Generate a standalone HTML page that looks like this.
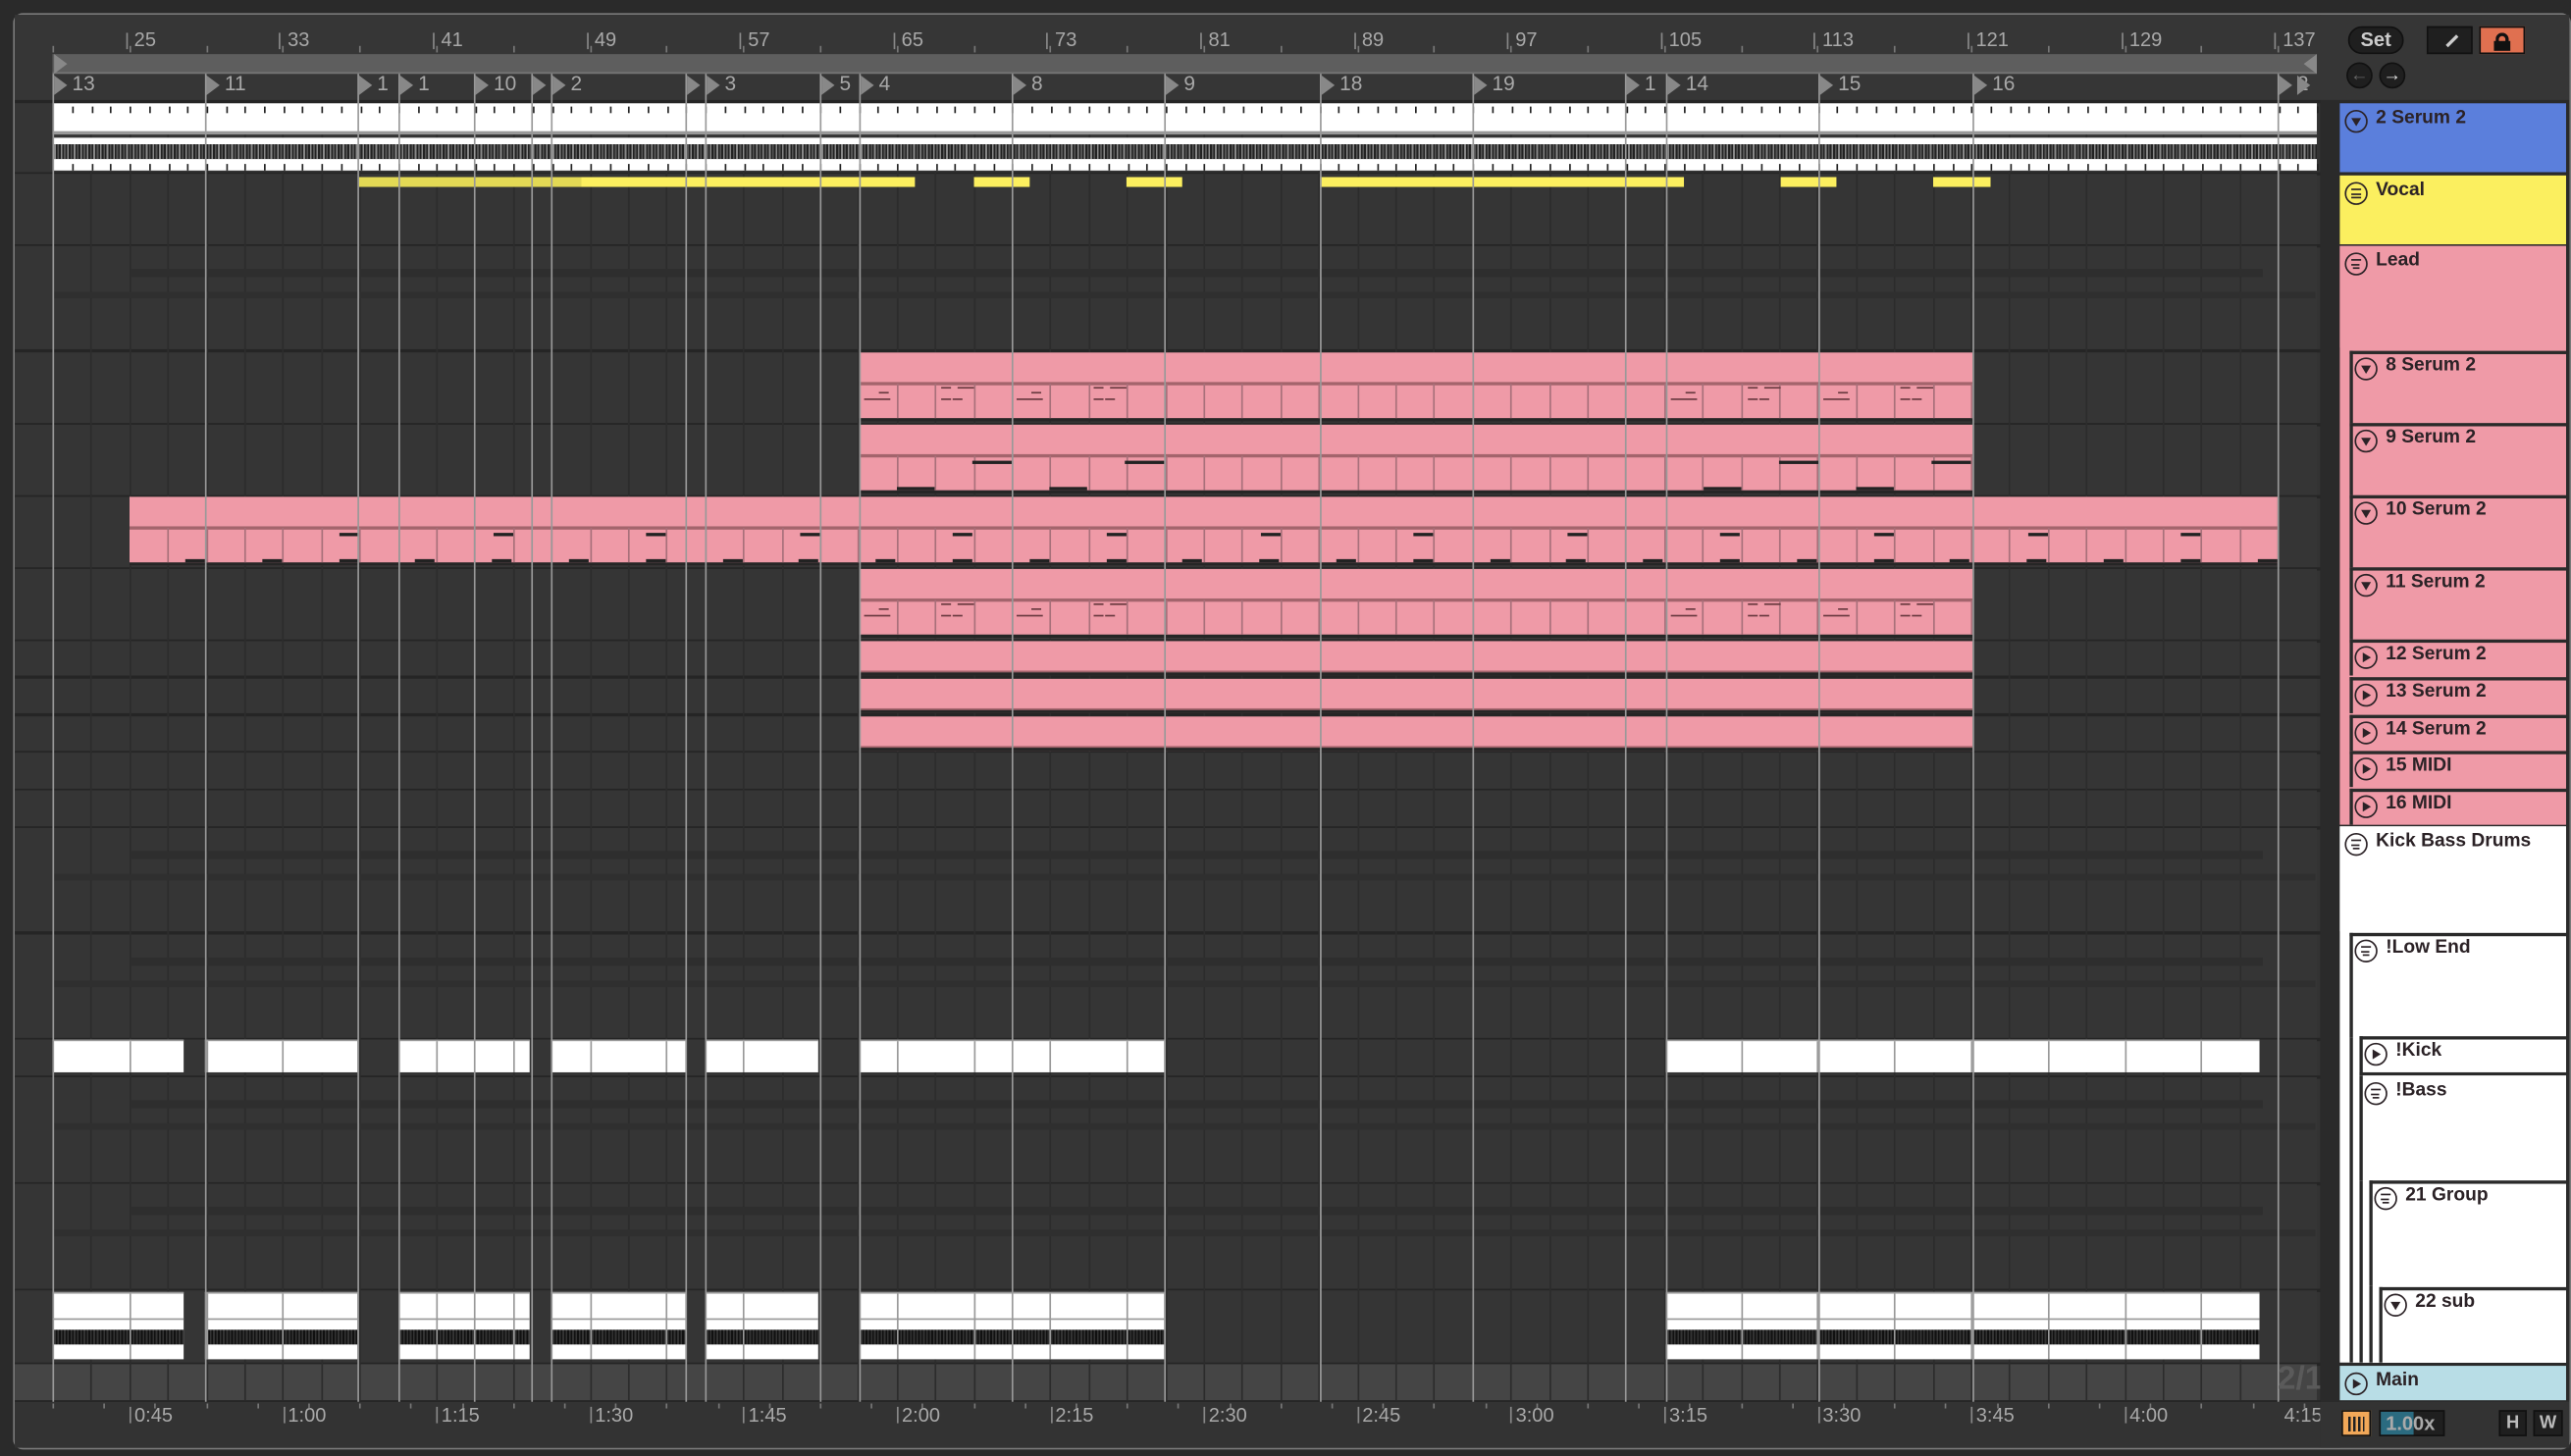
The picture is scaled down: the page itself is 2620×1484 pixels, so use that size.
<!DOCTYPE html>
<html><head><meta charset="utf-8">
<style>
*{margin:0;padding:0;box-sizing:border-box}
html,body{width:2620px;height:1484px;overflow:hidden;background:#2a2a2a}
#s{position:absolute;left:0;top:0;width:1568px;height:888px;transform:scale(1.67092,1.67117);transform-origin:0 0;background:#2a2a2a;font-family:"Liberation Sans",sans-serif}
.a{position:absolute}
.rn{position:absolute;font-size:12px;color:#a8a8a8;font-family:"Liberation Sans Narrow","Liberation Sans",sans-serif}
.hd{position:absolute;font-size:11.5px;font-weight:bold;color:#2b2226;white-space:nowrap}
.ic{position:absolute;width:14px;height:14px;border:1.4px solid #2b2226;border-radius:50%}
</style></head><body>
<div id="s">
<div class="a" style="left:8px;top:8px;width:1560px;height:876px;border:1.5px solid #7a7a7a;border-radius:6px;background:#333"></div>
<div class="a" style="left:9px;top:9px;width:1418px;height:52px;background:#363636"></div>
<div class="a" style="left:32px;top:33px;width:1381px;height:12px;background:#5e5e5e;border-bottom:1px solid #777"></div>
<div class="a" style="left:9px;top:61px;width:1418px;height:2px;background:#252525"></div>
<div id="g"></div>
</div>
<script>
const S=document.getElementById('g');
function d(x,y,w,h,st,txt,cls){const e=document.createElement('div');e.className=cls||'a';e.style.cssText=`left:${x}px;top:${y}px;width:${w}px;height:${h}px;`+(st||'');if(txt!==undefined)e.innerHTML=txt;S.appendChild(e);return e;}
const X=b=>32+(b-21)*11.7;
// ruler numbers
for(let b=25;b<=137;b+=8){const x=X(b);d(x-2,20,1,10,'background:#888');d(x+3,17,40,14,'',String(b),'rn');}
// small ruler ticks
for(let b=21;b<=137;b+=4){d(X(b),28,1,4,'background:#777');}
// lanes
const L=[[63,42],[106,43],[150,63],[215,43],[259,43],[303,43],[347,43],[391,21],[414,21],[437,21],[459,22],[482,22],[505,63],[570,63],[634,22],[657,64],[722,64],[787,44],[832,22]];
L.forEach(([y,h],i)=>{d(9,y,1404,h,'background:'+(i==18?'#454545':'#353535'));d(9,y+h,1418,2,'background:#252525');});
// grid lines
for(let b=23;b<=137;b+=2){d(X(b),63,1,791,'background:#2c2c2c');}
// faint group content
[[150,213],[505,567],[570,632],[657,720],[722,785]].forEach(([a,b])=>{d(80,a+14,1300,5,'background:#2e2e2e');d(32,a+28,1380,4,'background:#2f2f2f');});
// 2 Serum 2 audio clip
d(32,63,1381,19,'background:#fff;border-bottom:2px solid #999');
for(let x=44;x<1413;x+=11.7)d(x,65,1,4,'background:#222');
d(32,84,1381,4,'background:#fff');
d(32,88,1381,9,'background:repeating-linear-gradient(90deg,#222 0 1px,#888 1px 2px,#222 2px 3px,#555 3px 4px)');
d(32,97,1381,7,'background:#fff');
for(let x=44;x<1413;x+=11.7)d(x,100,1,4,'background:#222');
// vocal
[[219,558],[594,628],[687,721],[805,1027],[1086,1120],[1179,1214]].forEach(([a,b])=>d(a,108,b-a,6,'background:'+(a==219?'linear-gradient(90deg,#e3d955 0 40%,#fcef5f 40%)':'#fcef5f')));
// pink clips
function pink(a,b,y,h,notes){d(a,y,b-a,h,'background:#ef9aa7;border-bottom:2px solid #262626');if(h>30){d(a,y+18,b-a,1.5,'background:#a3646c');for(let bb=Math.ceil((a-32)/23.4)*23.4+32;bb<b;bb+=23.4)if(bb>a)d(bb,y+19,1,h-21,'background:#a8707a');
 if(notes=='arp'){[524,617,1016,1109].forEach(s=>{if(s>=a&&s<b){d(s+3,y+28,16,1,'background:#6a3a40');d(s+12,y+24,6,1,'background:#6a3a40');d(s+50,y+28,6,1,'background:#6a3a40');d(s+50,y+21,6,1,'background:#6a3a40');d(s+60,y+21,10,1,'background:#6a3a40');d(s+57,y+28,6,1,'background:#6a3a40');}});}
 if(notes=='bass'){[524,617,1016,1109].forEach(s=>{d(s+23,y+38,23,1.5,'background:#222');d(s+69,y+22,24,1.5,'background:#222');});}
 if(notes=='ten'){for(let s=79;s<1389;s+=46.8){d(s+34,y+38,12,1.5,'background:#222');if(Math.round((s-79)/46.8)%2==0)d(s+128-93.6+0,y+22,0,0);}for(let s=95;s<1389;s+=93.6){d(s+112,y+22,12,1.5,'background:#222');}}
}else d(a,y+h-3,b-a,1,'background:#a3646c');}
pink(524,1203,215,42,'arp');pink(524,1203,259,42,'bass');pink(79,1389,303,42,'ten');pink(524,1203,347,42,'arp');
pink(524,1203,391,21);pink(524,1203,414,21);pink(524,1203,437,21);
// kick/sub clips
const K=[[32,112],[125,218],[243,323],[336,418],[430,499],[524,710],[1016,1378]];
K.forEach(([a,b])=>{d(a,634,b-a,20,'background:#fff;border-top:1px solid #999');
 d(a,788,b-a,41,'background:#fff;border-top:1px solid #999');d(a,804,b-a,1,'background:#999');d(a,811,b-a,9,'background:repeating-linear-gradient(90deg,#111 0 1px,#333 1px 2px)');
 for(let x=32;x<b;x+=46.8)if(x>a){d(x,635,1,19,'background:#999');d(x,789,1,40,'background:#999');}});
// locator lines & markers
const M=[[32,'13'],[125,'11'],[218,'1'],[243,'1'],[289,'10'],[324,''],[336,'2'],[418,''],[430,'3'],[500,'5'],[524,'4'],[617,'8'],[710,'9'],[805,'18'],[898,'19'],[991,'1'],[1016,'14'],[1109,'15'],[1203,'16'],[1389,'2']];
M.forEach(([x,t])=>{d(x,45,1,810,'background:#999');d(x+1,46,0,0,'border-top:6px solid transparent;border-bottom:6px solid transparent;border-left:8px solid #888');
 if(t)d(x+12,44,30,15,'',t,'rn').style.fontSize='12.5px';});
d(1401,46,0,0,'border-top:6px solid transparent;border-bottom:6px solid transparent;border-left:8px solid #888');
d(1405,33,0,0,'border-top:6px solid transparent;border-bottom:6px solid transparent;border-right:8px solid #888');
d(33,33,0,0,'border-top:6px solid transparent;border-bottom:6px solid transparent;border-left:8px solid #888');
// bottom ruler
d(9,855,1418,28,'background:#333');
['0:45','1:00','1:15','1:30','1:45','2:00','2:15','2:30','2:45','3:00','3:15','3:30','3:45','4:00'].forEach((t,i)=>{const x=79+i*93.6;d(x,858,1,10,'background:#888');d(x+3,856,40,14,'',t,'rn');});
for(let x=32;x<1413;x+=31.2)d(x,856,1,3,'background:#777');
d(1393,856,40,14,'','4:15','rn');
d(1389,830,36,24,'font-size:20px;color:#5a5a5a;font-weight:bold','2/1');
// right panel
d(1415,9,152,52,'background:#363636');
d(1432,16,34,17,'background:#1f1f1f;border:1px solid #111;border-radius:9px;color:#ccc;font-size:12px;font-weight:bold;text-align:center;line-height:15px','Set');
d(1480,16,28,17,'background:#1f1f1f;border:1px solid #111','<div style="position:absolute;left:10px;top:7px;width:9px;height:2px;background:#ccc;transform:rotate(-45deg)"></div>');
d(1512,16,28,17,'background:#e07050;border:1px solid #111','<div style="position:absolute;left:9px;top:3px;width:8px;height:6px;border:2px solid #111;border-bottom:none;border-radius:4px 4px 0 0"></div><div style="position:absolute;left:8px;top:8px;width:10px;height:6px;background:#111"></div>');
d(1431,38,16,16,'background:#1f1f1f;border:1px solid #111;border-radius:50%;color:#666;font-size:11px;text-align:center;line-height:14px;font-weight:bold','&#8592;');
d(1451,38,16,16,'background:#1f1f1f;border:1px solid #111;border-radius:50%;color:#ddd;font-size:11px;text-align:center;line-height:14px;font-weight:bold','&#8594;');
d(1415,61,152,794,'background:#2a2a2a');
function ico(x,y,t){const e=d(x,y,14,14,'','', 'ic');
 if(t=='d')e.innerHTML='<div style="position:absolute;left:2.5px;top:4px;border-left:3.5px solid transparent;border-right:3.5px solid transparent;border-top:5px solid #2b2226"></div>';
 if(t=='p')e.innerHTML='<div style="position:absolute;left:4px;top:2.5px;border-top:3.5px solid transparent;border-bottom:3.5px solid transparent;border-left:5px solid #2b2226"></div>';
 if(t=='g'||t=='l'){const w=t=='g'?[6,6,6]:[6,5,4];[3,5.5,8].forEach((yy,i)=>e.innerHTML+=`<div style="position:absolute;left:${t=='g'?2.6:2.6+i*0.8}px;top:${yy}px;width:${w[i]}px;height:1.3px;background:#2b2226"></div>`);}
}
function H(x,y,w,h,c,lab,t,st){d(x,y,w,h,'background:'+c+';'+(st||''));ico(x+3,y+4,t);d(x+22,y+3,130,14,'',lab,'hd');}
H(1427,63,138,42,'#5b7fdc','2 Serum 2','d');
H(1427,107,138,42,'#fbef5f','Vocal','g');
d(1427,150,138,353,'background:#ef9aa7');H(1427,150,138,62,'#ef9aa7','Lead','l');
[[214,'8 Serum 2','d',44],[258,'9 Serum 2','d',44],[302,'10 Serum 2','d',44],[346,'11 Serum 2','d',44],[390,'12 Serum 2','p',22],[413,'13 Serum 2','p',22],[436,'14 Serum 2','p',22],[458,'15 MIDI','p',22],[481,'16 MIDI','p',22]].forEach(([y,l,t,h])=>H(1433,y,132,h,'#ef9aa7',l,t,'border-top:2px solid #2a2a2a;border-left:2px solid #2a2a2a'));
d(1427,504,138,327,'background:#fff');H(1427,504,138,64,'#fff','Kick Bass Drums','l');
d(1433,569,132,262,'background:#fff;border-top:2px solid #2a2a2a;border-left:2px solid #2a2a2a');H(1433,569,132,64,'#fff','!Low End','l','border-top:2px solid #2a2a2a;border-left:2px solid #2a2a2a');
H(1439,632,126,24,'#fff','!Kick','p','border-top:2px solid #2a2a2a;border-left:2px solid #2a2a2a;border-bottom:2px solid #2a2a2a');
d(1439,656,126,175,'background:#fff;border-left:2px solid #2a2a2a');H(1439,656,126,64,'#fff','!Bass','l','border-left:2px solid #2a2a2a');
d(1445,720,120,111,'background:#fff;border-top:2px solid #2a2a2a;border-left:2px solid #2a2a2a');H(1445,720,120,64,'#fff','21 Group','l','border-top:2px solid #2a2a2a;border-left:2px solid #2a2a2a');
H(1451,785,114,46,'#fff','22 sub','d','border-top:2px solid #2a2a2a;border-left:2px solid #2a2a2a');
H(1427,833,138,21,'#b8dde6','Main','p');
// bottom right controls
d(1415,855,152,28,'background:#333');
d(1428,860,18,16,'background:#f2a858;border:1px solid #111','<div style="position:absolute;left:3px;top:3px;width:10px;height:9px;background:repeating-linear-gradient(90deg,#222 0 1.5px,transparent 1.5px 3px)"></div>');
d(1451,860,40,16,'background:#1f1f1f;border:1px solid #111','<div style="position:absolute;left:0;top:0;width:20px;height:14px;background:#2b6b80"></div><div style="position:absolute;left:3px;top:0;font-size:12px;color:#aaa;font-weight:bold">1.00x</div>');
d(1524,860,17,16,'background:#1f1f1f;border:1px solid #111;color:#bbb;font-size:11px;font-weight:bold;text-align:center;line-height:14px','H');
d(1545,860,18,16,'background:#1f1f1f;border:1px solid #111;color:#bbb;font-size:11px;font-weight:bold;text-align:center;line-height:14px','W');
</script>
</body></html>
